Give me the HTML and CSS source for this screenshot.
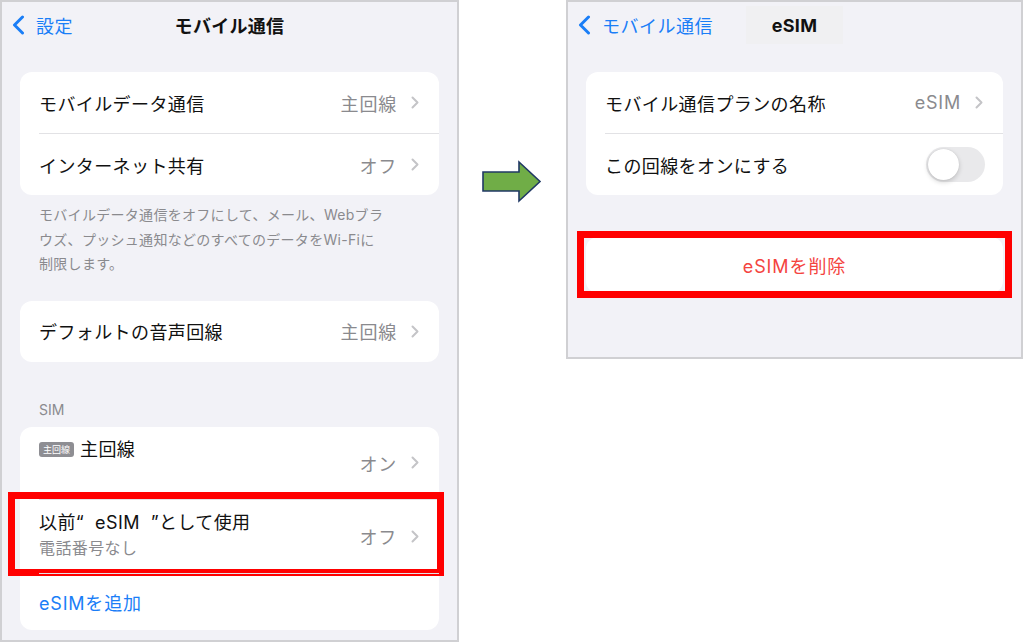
FILE: index.html
```html
<!DOCTYPE html>
<html lang="ja">

<head>
    <meta charset="UTF-8">
    <meta name="viewport" content="width=device-width, initial-scale=1.0">
    <title>eSIMを削除</title>
    <link rel="stylesheet" href="styles.css">
</head>

<body>
    <div class="page">
        <!-- 左: モバイル通信 -->
        <div class="phone phone-left">
            <div class="nav">
                <div class="back">
                    <svg class="back-icon" width="13" height="20" viewBox="0 0 13 20"><path d="M10.5 2L2.5 10l8 8" /></svg>
                    <span>設定</span>
                </div>
                <div class="nav-title">モバイル通信</div>
                <div></div>
            </div>

            <div class="card">
                <div class="row">
                    <span class="label">モバイルデータ通信</span>
                    <span class="value">主回線</span>
                    <svg class="chev" width="8" height="13" viewBox="0 0 8 13"><path d="M1.5 1.5l5 5-5 5" /></svg>
                </div>
                <div class="row">
                    <span class="label">インターネット共有</span>
                    <span class="value">オフ</span>
                    <svg class="chev" width="8" height="13" viewBox="0 0 8 13"><path d="M1.5 1.5l5 5-5 5" /></svg>
                </div>
            </div>
            <p class="note">モバイルデータ通信をオフにして、メール、Webブラ<br>ウズ、プッシュ通知などのすべてのデータをWi-Fiに<br>制限します。</p>

            <div class="card">
                <div class="row">
                    <span class="label">デフォルトの音声回線</span>
                    <span class="value">主回線</span>
                    <svg class="chev" width="8" height="13" viewBox="0 0 8 13"><path d="M1.5 1.5l5 5-5 5" /></svg>
                </div>
            </div>

            <div class="section-head">SIM</div>
            <div class="card">
                <div class="row row-line1">
                    <div class="label-block">
                        <div class="label"><span class="badge">主回線</span>主回線</div>
                        <div class="sub"></div>
                    </div>
                    <span class="value">オン</span>
                    <svg class="chev" width="8" height="13" viewBox="0 0 8 13"><path d="M1.5 1.5l5 5-5 5" /></svg>
                </div>
                <div class="row row-line2">
                    <div class="label-block">
                        <div class="label">以前“&nbsp;&nbsp;eSIM&nbsp;&nbsp;”として使用</div>
                        <div class="sub">電話番号なし</div>
                    </div>
                    <span class="value">オフ</span>
                    <svg class="chev" width="8" height="13" viewBox="0 0 8 13"><path d="M1.5 1.5l5 5-5 5" /></svg>
                    <div class="mark mark-left"></div>
                </div>
                <div class="row row-add">
                    <span class="link">eSIMを追加</span>
                </div>
            </div>
        </div>

        <!-- 矢印 -->
        <div class="arrow-col">
            <svg width="62" height="44" viewBox="0 0 62 44">
                <path class="arrow" d="M2 12H38V2L59 21.5 38 41V31H2Z" />
            </svg>
        </div>

        <!-- 右: eSIM -->
        <div class="phone phone-right">
            <div class="nav">
                <div class="back">
                    <svg class="back-icon" width="13" height="20" viewBox="0 0 13 20"><path d="M10.5 2L2.5 10l8 8" /></svg>
                    <span>モバイル通信</span>
                </div>
                <div class="nav-title title-box">eSIM</div>
                <div></div>
            </div>

            <div class="card">
                <div class="row">
                    <span class="label">モバイル通信プランの名称</span>
                    <span class="value">eSIM</span>
                    <svg class="chev" width="8" height="13" viewBox="0 0 8 13"><path d="M1.5 1.5l5 5-5 5" /></svg>
                </div>
                <div class="row">
                    <span class="label">この回線をオンにする</span>
                    <span class="toggle"><i></i></span>
                </div>
            </div>

            <div class="card card-delete">
                <span class="danger">eSIMを削除</span>
                <div class="mark mark-right"></div>
            </div>
        </div>
    </div>
</body>

</html>
```

FILE: styles.css
```css
* {
    box-sizing: border-box;
}

body {
    margin: 0;
    background-color: #fff;
    font-family: Inter, "Noto Sans CJK JP", sans-serif;
    color: #111;
}

.page {
    display: flex;
    align-items: flex-start;
    width: 1024px;
    height: 644px;
}

.phone {
    background-color: #f2f2f7;
    border: 2px solid #d0d0d3;
    padding: 0 18px;
}

.phone-left {
    width: 459px;
    height: 642px;
}

.phone-right {
    width: 457px;
    height: 359px;
}

.arrow-col {
    width: 107px;
    padding: 160px 0 0 22px;
}

.arrow {
    fill: #70ad47;
    stroke: #203864;
    stroke-width: 1.6;
}

/* ナビゲーションバー */
.nav {
    height: 46px;
    display: grid;
    grid-template-columns: 1fr auto 1fr;
    align-items: center;
    margin: 0 -8px;
}

.back {
    display: flex;
    align-items: center;
    gap: 11px;
    color: #1a7ef7;
    font-size: 18px;
    letter-spacing: 0.5px;
}

.back-icon path {
    fill: none;
    stroke: #1a7ef7;
    stroke-width: 3;
    stroke-linecap: round;
    stroke-linejoin: round;
}

.nav-title {
    font-size: 18px;
    font-weight: 700;
    letter-spacing: 0.3px;
}

.title-box {
    background-color: #f0f0f2;
    padding: 9px 26px 8px;
}

/* カード */
.card {
    background-color: #fff;
    border-radius: 12px;
    padding-left: 19px;
    margin-top: 24px;
    position: relative;
}

.row {
    height: 61px;
    display: flex;
    align-items: center;
    padding-right: 20px;
    font-size: 18px;
    letter-spacing: 0.4px;
    position: relative;
}

.row + .row {
    height: 62px;
    border-top: 1px solid #e2e2e5;
}

.label {
    flex: 1;
    display: flex;
    align-items: center;
}

.label-block {
    flex: 1;
}

.value {
    color: #8a8a8e;
    margin-right: 14px;
    letter-spacing: 0.8px;
}

.chev path {
    fill: none;
    stroke: #c4c4c7;
    stroke-width: 2;
    stroke-linecap: round;
    stroke-linejoin: round;
}

.note {
    margin: 0;
    padding: 8px 19px 0;
    font-size: 14px;
    line-height: 24.5px;
    color: #8a8a8e;
    letter-spacing: 0.3px;
}

.section-head {
    margin-top: 38px;
    padding-left: 19px;
    font-size: 14px;
    line-height: 20px;
    color: #8a8a8e;
}

.section-head + .card {
    margin-top: 7px;
}

.row.row-line1 {
    height: 72px;
    border-top: none;
}

.row.row-line2 {
    height: 74px;
}

.row.row-add {
    height: 57px;
}

.label-block .label {
    line-height: 24px;
    height: 24px;
    white-space: pre;
}

.sub {
    height: 26px;
    line-height: 26px;
    font-size: 16px;
    color: #8a8a8e;
}

.badge {
    display: inline-block;
    background-color: #8e8e93;
    color: #fff;
    font-size: 9px;
    line-height: 15px;
    height: 15px;
    padding: 0 4px;
    border-radius: 3px;
    margin-right: 6px;
    letter-spacing: 0;
}

.link {
    color: #1a7ef7;
    letter-spacing: 0.8px;
}

/* トグル */
.toggle {
    width: 59px;
    height: 35px;
    border-radius: 18px;
    background-color: #e9e9eb;
    padding: 2px;
    margin-right: -2px;
}

.toggle i {
    display: block;
    width: 31px;
    height: 31px;
    border-radius: 50%;
    background-color: #fff;
    box-shadow: 0 2px 5px rgba(0, 0, 0, 0.18), 0 0 1px rgba(0, 0, 0, 0.15);
}

.card-delete {
    margin-top: 42px;
    height: 56px;
    padding-left: 0;
    display: flex;
    justify-content: center;
    align-items: center;
}

.danger {
    color: #f4443f;
    font-size: 18px;
    letter-spacing: 0.9px;
}

/* 赤枠 */
.mark {
    position: absolute;
    border: 7px solid #ff0000;
}

.mark-left {
    left: -31px;
    right: -5px;
    top: -8px;
    bottom: -3px;
}

.mark-right {
    left: -9px;
    right: -9px;
    top: -6px;
    bottom: -5px;
}
```
